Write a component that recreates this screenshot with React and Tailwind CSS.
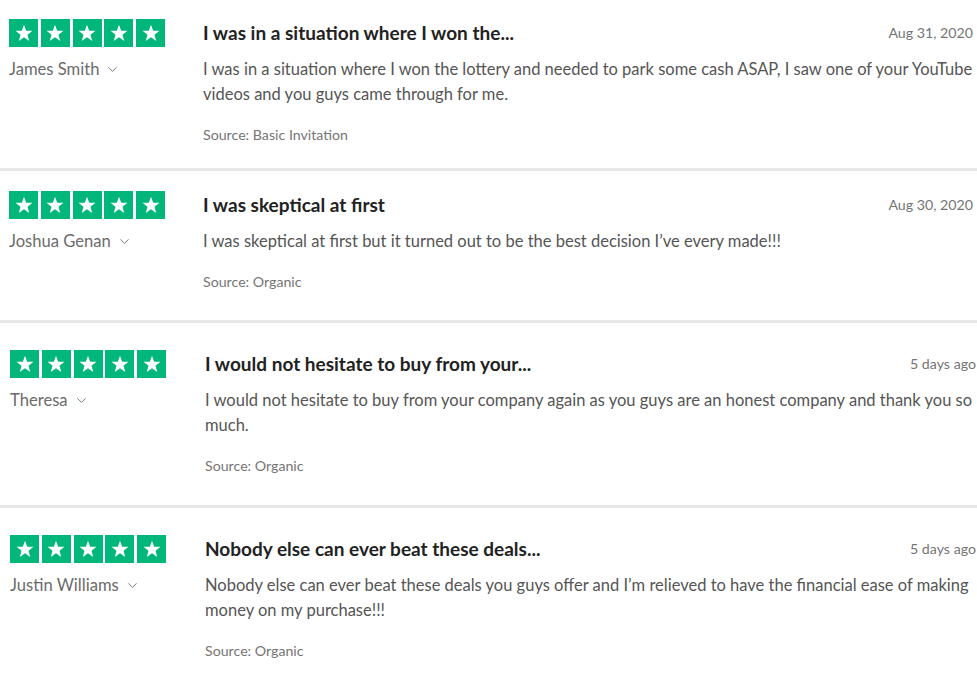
import { ChevronDown } from 'lucide-react';

const reviews = [
  {
    name: 'James Smith',
    title: 'I was in a situation where I won the...',
    date: 'Aug 31, 2020',
    body: "I was in a situation where I won the lottery and needed to park some cash ASAP, I saw one of your YouTube videos and you guys came through for me.",
    source: 'Basic Invitation',
    pad: 'pt-[19px] pb-[23px]',
    left: 'w-[203px] pl-[9px]',
    right: 'pr-[4px]',
  },
  {
    name: 'Joshua Genan',
    title: 'I was skeptical at first',
    date: 'Aug 30, 2020',
    body: 'I was skeptical at first but it turned out to be the best decision I\u2019ve every made!!!',
    source: 'Organic',
    pad: 'pt-[20px] pb-[28px]',
    left: 'w-[203px] pl-[9px]',
    right: 'pr-[4px]',
  },
  {
    name: 'Theresa',
    title: 'I would not hesitate to buy from your...',
    date: '5 days ago',
    body: 'I would not hesitate to buy from your company again as you guys are an honest company and thank you so much.',
    source: 'Organic',
    pad: 'pt-[27px] pb-[29px]',
    left: 'w-[205px] pl-[10px]',
    right: 'pr-[1px]',
  },
  {
    name: 'Justin Williams',
    title: 'Nobody else can ever beat these deals...',
    date: '5 days ago',
    body: 'Nobody else can ever beat these deals you guys offer and I\u2019m relieved to have the financial ease of making money on my purchase!!!',
    source: 'Organic',
    pad: 'pt-[27px] pb-[20px]',
    left: 'w-[205px] pl-[10px]',
    right: 'pr-[1px]',
  },
];

function Stars() {
  return (
    <div className="flex gap-[2.75px]">
      {[0, 1, 2, 3, 4].map((i) => (
        <div key={i} className="w-[29px] h-[28px] bg-[#00b67a] flex items-center justify-center">
          <svg viewBox="0 0 24 24" className="w-[20px] h-[20px]">
            <polygon
              fill="#fff"
              points="12,2 14.6,9.2 22.2,9.4 16.2,14.1 18.3,21.5 12,17.2 5.7,21.5 7.8,14.1 1.8,9.4 9.4,9.2"
            />
          </svg>
        </div>
      ))}
    </div>
  );
}

function Review({ r, last }) {
  return (
    <div className={`flex ${r.pad} ${last ? '' : 'border-b-[3px] border-[#e8e8e8]'}`}>
      <div className={`${r.left} shrink-0`}>
        <Stars />
        <div className="mt-[10px] flex items-center text-[16.6px] leading-[25px] text-[#6b6b6b]">
          {r.name}
          <ChevronDown className="w-[15px] h-[15px] ml-[6px] text-[#7a7a7a]" strokeWidth={1.6} />
        </div>
      </div>
      <div className={`flex-1 ${r.right}`}>
        <div className="flex items-center justify-between h-[28px]">
          <h3 className="text-[19px] font-bold text-[#222] leading-[28px]">{r.title}</h3>
          <span className="text-[14.2px] text-[#757575]">{r.date}</span>
        </div>
        <p className="mt-[10px] text-[16.5px] leading-[25px] text-[#555]">{r.body}</p>
        <p className="mt-[18px] text-[14.2px] leading-[20px] text-[#757575]">Source: {r.source}</p>
      </div>
    </div>
  );
}

export default function App() {
  return (
    <div className="w-[977px] h-[681px] overflow-hidden bg-white" style={{ fontFamily: 'Lato, "Open Sans", sans-serif' }}>
      {reviews.map((r, i) => (
        <Review key={i} r={r} last={i === reviews.length - 1} />
      ))}
    </div>
  );
}
